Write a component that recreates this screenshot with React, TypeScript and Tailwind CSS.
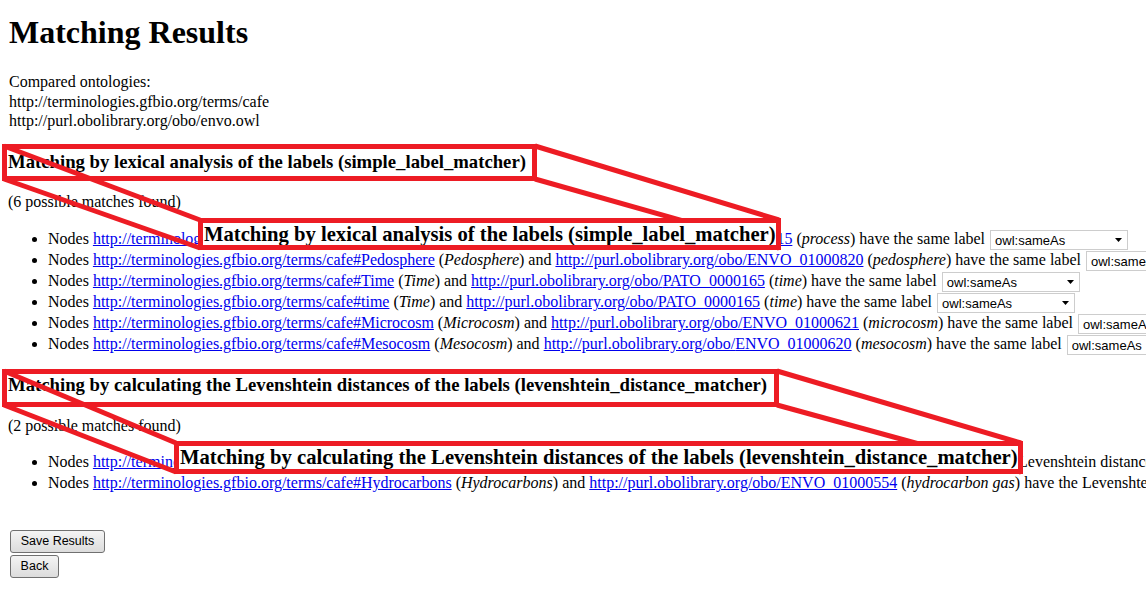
const Link = ({ children }: { children: React.ReactNode }) => (
  <a href="#" className="text-[#0000ee] underline">
    {children}
  </a>
);

const SameAs = () => (
  <span className="ml-[1px] inline-flex h-[20px] w-[138px] items-center justify-between border border-[#cdcdcd] bg-white pl-[4px] pr-[5px] align-middle font-['Liberation_Sans',Arial,sans-serif] text-[13px] leading-none">
    owl:sameAs
    <svg width="7" height="4" viewBox="0 0 7 4">
      <path d="M0 0h7L3.5 4z" fill="#000" />
    </svg>
  </span>
);

const lexical = [
  ["Process", "Process", "BFO_0000015", "process"],
  ["Pedosphere", "Pedosphere", "ENVO_01000820", "pedosphere"],
  ["Time", "Time", "PATO_0000165", "time"],
  ["time", "Time", "PATO_0000165", "time"],
  ["Microcosm", "Microcosm", "ENVO_01000621", "microcosm"],
  ["Mesocosm", "Mesocosm", "ENVO_01000620", "mesocosm"],
];

const levenshtein = [
  ["Hydrocarbon", "Hydrocarbon", "ENVO_01000553", "carbonic"],
  ["Hydrocarbons", "Hydrocarbons", "ENVO_01000554", "hydrocarbon gas"],
];

const App = () => {
  return (
    <div className="relative h-[602px] w-[1146px] overflow-hidden bg-white font-['Liberation_Serif','Times_New_Roman',serif] text-[16px] text-black">
      <div className="px-2">
        <h1 className="mt-[14px] pl-px text-[32px] font-bold leading-[37px]">Matching Results</h1>

        <div className="mt-[21px] pl-px leading-[19.7px]">
          Compared ontologies:
          <br />
          http://terminologies.gfbio.org/terms/cafe
          <br />
          http://purl.obolibrary.org/obo/envo.owl
        </div>

        <h3 className="mt-[20px] whitespace-nowrap text-[18.72px] font-bold leading-[22px]">
          Matching by lexical analysis of the labels (simple_label_matcher)
        </h3>
        <p className="mt-[19px] leading-[20px]">(6 possible matches found)</p>
        <ul className="mt-[16px] list-disc whitespace-nowrap pl-10">
          {lexical.map(([term, label, obo, oboLabel], i) => (
            <li key={i} className="h-[21px] leading-[21px]">
              Nodes <Link>http://terminologies.gfbio.org/terms/cafe#{term}</Link> (<i>{label}</i>) and{" "}
              <Link>http://purl.obolibrary.org/obo/{obo}</Link> (<i>{oboLabel}</i>) have the same label <SameAs />
            </li>
          ))}
        </ul>

        <h3 className="mt-[20px] whitespace-nowrap text-[18.72px] font-bold leading-[22px]">
          Matching by calculating the Levenshtein distances of the labels (levenshtein_distance_matcher)
        </h3>
        <p className="mt-[20px] leading-[20px]">(2 possible matches found)</p>
        <ul className="mt-[15px] list-disc whitespace-nowrap pl-10">
          {levenshtein.map(([term, label, obo, oboLabel], i) => (
            <li key={i} className="h-[21px] leading-[21px]">
              Nodes <Link>http://terminologies.gfbio.org/terms/cafe#{term}</Link> (<i>{label}</i>) and{" "}
              <Link>http://purl.obolibrary.org/obo/{obo}</Link> (<i>{oboLabel}</i>) have the Levenshtein distance of 1
            </li>
          ))}
        </ul>

        <div className="ml-[2px] mt-[37px] flex flex-col items-start gap-[2px] font-['Liberation_Sans',Arial,sans-serif] text-[12.5px]">
          <button className="h-[23px] w-[95px] rounded-[3px] border border-[#707070] bg-linear-to-b from-[#f4f4f4] to-[#dcdcdc] text-black">
            Save Results
          </button>
          <button className="h-[23px] w-[49px] rounded-[3px] border border-[#707070] bg-linear-to-b from-[#f4f4f4] to-[#dcdcdc] text-black">
            Back
          </button>
        </div>
      </div>

      {/* zoom callouts drawn over the page */}
      <div className="pointer-events-none absolute inset-0">
        <svg className="absolute inset-0" width="1146" height="602">
          <g stroke="#ed1c24" strokeWidth="5" fill="none">
            <line x1="4" y1="146" x2="200" y2="220" />
            <line x1="4" y1="179" x2="200" y2="248" />
            <line x1="535" y1="146" x2="779" y2="220" />
            <line x1="535" y1="179" x2="779" y2="248" />
            <line x1="4" y1="371" x2="176" y2="443" />
            <line x1="4" y1="405" x2="176" y2="472" />
            <line x1="777" y1="371" x2="1021" y2="443" />
            <line x1="777" y1="405" x2="1021" y2="472" />
          </g>
        </svg>

        <div className="absolute left-[2px] top-[144px] h-[37px] w-[535px] border-[5px] border-[#ed1c24]" />
        <div className="absolute left-[198px] top-[218px] h-[32px] w-[583px] overflow-hidden whitespace-nowrap border-[5px] border-[#ed1c24] bg-white pl-[1px] text-[20.65px] font-bold leading-[22px]">
          Matching by lexical analysis of the labels (simple_label_matcher)
        </div>

        <div className="absolute left-[2px] top-[369px] h-[38px] w-[777px] border-[5px] border-[#ed1c24]" />
        <div className="absolute left-[174px] top-[441px] h-[33px] w-[849px] overflow-hidden whitespace-nowrap border-[5px] border-[#ed1c24] bg-white pl-[1px] text-[20.65px] font-bold leading-[23px]">
          Matching by calculating the Levenshtein distances of the labels (levenshtein_distance_matcher)
        </div>
      </div>
    </div>
  );
};

export default App;
